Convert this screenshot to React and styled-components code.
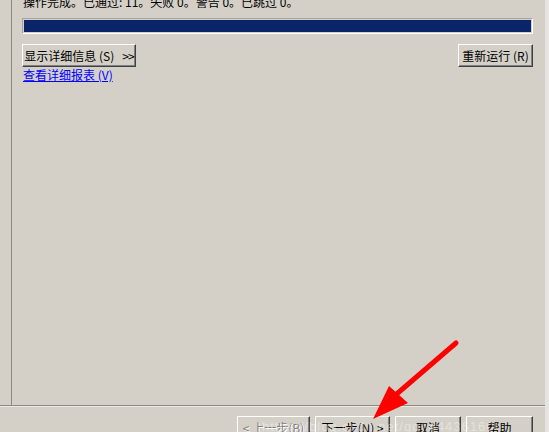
import React from "react";
import styled, { createGlobalStyle } from "styled-components";

const GlobalStyle = createGlobalStyle`
  html, body {
    margin: 0;
    padding: 0;
    background: #e6e4e0;
    overflow: hidden;
  }
  body {
    font-family: "Noto Sans CJK SC", "Liberation Sans", sans-serif;
    font-size: 12px;
    color: #000;
  }
`;

export default function App() {
  return (
    <>
      <GlobalStyle />
      <Window>
        <Body>
          <SideRail />
          <Main>
            <Status>操作完成。已通过: 11。失败 0。警告 0。已跳过 0。</Status>
            <Progress>
              <ProgressFill />
            </Progress>
            <ActionRow>
              <Button $width={114}>
                显示详细信息 (S) <Chevrons>&gt;&gt;</Chevrons>
              </Button>
              <Button $width={75}>重新运行 (R)</Button>
            </ActionRow>
            <ReportLink href="#">查看详细报表 (V)</ReportLink>
          </Main>
        </Body>
        <Separator />
        <Footer>
          <Button $width={73} disabled>
            &lt; 上一步(B)
          </Button>
          <Button $width={75}>下一步(N) &gt;</Button>
          <Button $width={66}>取消</Button>
          <Button $width={67}>帮助</Button>
        </Footer>
        <Watermark>https://blog.csdn.net/qq_44436160</Watermark>
        <Arrow width="549" height="432" viewBox="0 0 549 432">
          <line
            x1="456"
            y1="343"
            x2="392"
            y2="398"
            stroke="#ff0000"
            strokeWidth="5"
            strokeLinecap="round"
          />
          <polygon points="373,419 389,386 408,403" fill="#ff0000" />
        </Arrow>
      </Window>
    </>
  );
}

const Window = styled.div`
  position: relative;
  width: 545px;
  height: 432px;
  background: #d4d0c8;
  display: flex;
  flex-direction: column;
  overflow: hidden;
`;

const Body = styled.div`
  display: flex;
  height: 405px;
  flex-shrink: 0;
`;

const SideRail = styled.div`
  width: 11px;
  border-right: 1px solid #8e8b86;
`;

const Main = styled.div`
  flex: 1;
  padding: 0 12px 0 10px;
  display: flex;
  flex-direction: column;
`;

const Status = styled.div`
  margin-top: -8px;
  height: 24px;
  line-height: 20px;
  padding-left: 1px;
  white-space: nowrap;
`;

const Progress = styled.div`
  height: 16px;
  box-sizing: border-box;
  border: 1px solid;
  border-color: #a8a5a0 #ffffff #ffffff #a8a5a0;
  padding: 1px;
  margin-top: 2px;
`;

const ProgressFill = styled.div`
  height: 100%;
  background: #0a246a;
`;

const ActionRow = styled.div`
  display: flex;
  justify-content: space-between;
  margin-top: 10px;
`;

const Button = styled.button`
  width: ${(p) => p.$width}px;
  height: 23px;
  flex-shrink: 0;
  box-sizing: border-box;
  padding: 0;
  background: #d4d0c8;
  border: 1px solid;
  border-color: #ffffff #404040 #404040 #ffffff;
  box-shadow: inset -1px -1px 0 #808080;
  font-family: "Noto Sans CJK SC", "Liberation Sans", sans-serif;
  font-size: 12px;
  color: ${(p) => (p.disabled ? "#808080" : "#000")};
  text-shadow: ${(p) => (p.disabled ? "1px 1px 0 #ffffff" : "none")};
  white-space: nowrap;
  display: flex;
  align-items: center;
  justify-content: center;
  gap: 4px;
`;

const Chevrons = styled.span`
  letter-spacing: -1px;
  margin-left: 4px;
`;

const ReportLink = styled.a`
  margin-top: 1px;
  align-self: flex-start;
  color: #0000ff;
  text-decoration: underline;
  font-size: 12px;
  line-height: 14px;
  padding-left: 1px;
`;

const Separator = styled.div`
  height: 1px;
  flex-shrink: 0;
  background: #8e8b86;
  border-bottom: 1px solid #ece9e4;
`;

const Footer = styled.div`
  display: flex;
  justify-content: flex-end;
  gap: 5px;
  padding: 9px 12px 0 0;
`;

const Watermark = styled.div`
  position: absolute;
  left: 262px;
  top: 419px;
  font-family: "Liberation Sans", sans-serif;
  font-size: 13px;
  color: rgba(255, 255, 255, 0.4);
  letter-spacing: 1px;
  white-space: nowrap;
  pointer-events: none;
`;

const Arrow = styled.svg`
  position: absolute;
  left: 0;
  top: 0;
  pointer-events: none;
`;
